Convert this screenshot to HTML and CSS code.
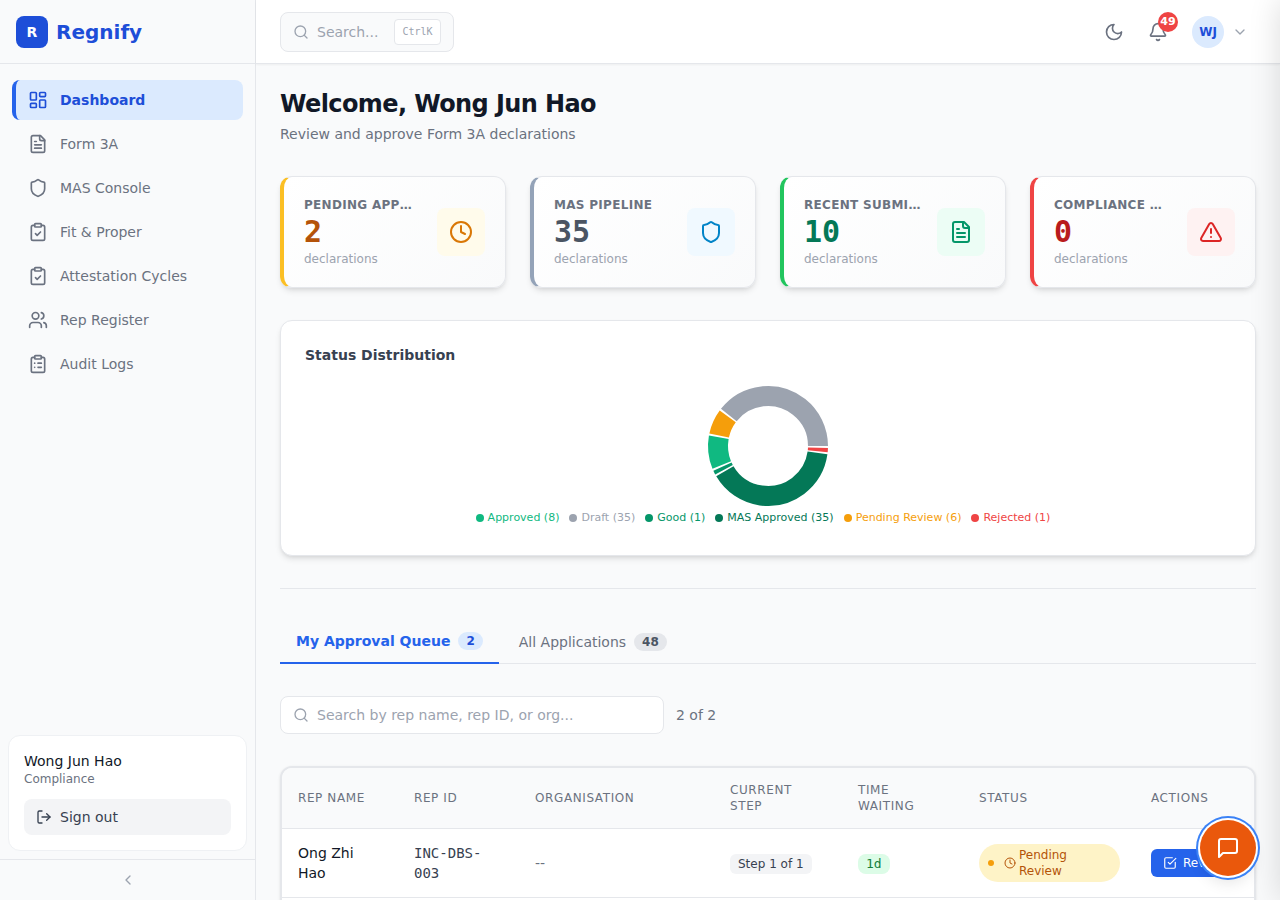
FILE: index.html
```html
<!DOCTYPE html>
<html lang="en">
<head>
<meta charset="utf-8">
<title>Regnify</title>
<link rel="stylesheet" href="styles.css">
</head>
<body>
<div class="app">
  <aside class="sidebar">
    <div class="brand">
      <div class="brand-mark">R</div>
      <div class="brand-name">Regnify</div>
    </div>
    <nav class="nav">
      <a class="nav-item active">
        <svg class="ic20" viewBox="0 0 24 24"><rect x="3" y="3" width="7" height="9" rx="1"/><rect x="14" y="3" width="7" height="5" rx="1"/><rect x="14" y="12" width="7" height="9" rx="1"/><rect x="3" y="16" width="7" height="5" rx="1"/></svg>
        <span>Dashboard</span>
      </a>
      <a class="nav-item">
        <svg class="ic20" viewBox="0 0 24 24"><path d="M15 2H6a2 2 0 0 0-2 2v16a2 2 0 0 0 2 2h12a2 2 0 0 0 2-2V7Z"/><path d="M14 2v4a2 2 0 0 0 2 2h4"/><path d="M10 9H8"/><path d="M16 13H8"/><path d="M16 17H8"/></svg>
        <span>Form 3A</span>
      </a>
      <a class="nav-item">
        <svg class="ic20" viewBox="0 0 24 24"><path d="M20 13c0 5-3.5 7.5-7.66 8.95a1 1 0 0 1-.67-.01C7.5 20.5 4 18 4 13V6a1 1 0 0 1 1-1c2 0 4.5-1.2 6.24-2.72a1.17 1.17 0 0 1 1.52 0C14.51 3.81 17 5 19 5a1 1 0 0 1 1 1z"/></svg>
        <span>MAS Console</span>
      </a>
      <a class="nav-item">
        <svg class="ic20" viewBox="0 0 24 24"><rect x="8" y="2" width="8" height="4" rx="1"/><path d="M16 4h2a2 2 0 0 1 2 2v14a2 2 0 0 1-2 2H6a2 2 0 0 1-2-2V6a2 2 0 0 1 2-2h2"/><path d="m9 14 2 2 4-4"/></svg>
        <span>Fit &amp; Proper</span>
      </a>
      <a class="nav-item">
        <svg class="ic20" viewBox="0 0 24 24"><rect x="8" y="2" width="8" height="4" rx="1"/><path d="M16 4h2a2 2 0 0 1 2 2v14a2 2 0 0 1-2 2H6a2 2 0 0 1-2-2V6a2 2 0 0 1 2-2h2"/><path d="m9 14 2 2 4-4"/></svg>
        <span>Attestation Cycles</span>
      </a>
      <a class="nav-item">
        <svg class="ic20" viewBox="0 0 24 24"><path d="M16 21v-2a4 4 0 0 0-4-4H6a4 4 0 0 0-4 4v2"/><circle cx="9" cy="7" r="4"/><path d="M22 21v-2a4 4 0 0 0-3-3.87"/><path d="M16 3.13a4 4 0 0 1 0 7.75"/></svg>
        <span>Rep Register</span>
      </a>
      <a class="nav-item">
        <svg class="ic20" viewBox="0 0 24 24"><rect x="8" y="2" width="8" height="4" rx="1"/><path d="M16 4h2a2 2 0 0 1 2 2v14a2 2 0 0 1-2 2H6a2 2 0 0 1-2-2V6a2 2 0 0 1 2-2h2"/><path d="M12 11h4"/><path d="M12 16h4"/><path d="M8 11h.01"/><path d="M8 16h.01"/></svg>
        <span>Audit Logs</span>
      </a>
    </nav>
    <div class="user-card">
      <div class="user-name">Wong Jun Hao</div>
      <div class="user-role">Compliance</div>
      <button class="signout">
        <svg class="ic16" viewBox="0 0 24 24"><path d="M9 21H5a2 2 0 0 1-2-2V5a2 2 0 0 1 2-2h4"/><path d="m16 17 5-5-5-5"/><path d="M21 12H9"/></svg>
        <span>Sign out</span>
      </button>
    </div>
    <div class="collapse">
      <svg class="ic16" viewBox="0 0 24 24"><path d="m15 18-6-6 6-6"/></svg>
    </div>
  </aside>

  <div class="content">
    <header class="topbar">
      <div class="top-search">
        <svg class="ic16" viewBox="0 0 24 24"><circle cx="11" cy="11" r="8"/><path d="m21 21-4.3-4.3"/></svg>
        <span class="top-search-text">Search...</span>
        <kbd class="kbd">CtrlK</kbd>
      </div>
      <div class="top-actions">
        <svg class="ic20 moon" viewBox="0 0 24 24"><path d="M12 3a6 6 0 0 0 9 9 9 9 0 1 1-9-9Z"/></svg>
        <div class="bell">
          <svg class="ic20" viewBox="0 0 24 24"><path d="M10.27 21a2 2 0 0 0 3.46 0"/><path d="M3.26 15.33A1 1 0 0 0 4 17h16a1 1 0 0 0 .74-1.67C19.41 13.96 18 12.5 18 8A6 6 0 0 0 6 8c0 4.5-1.41 5.96-2.74 7.33"/></svg>
          <span class="bell-badge">49</span>
        </div>
        <div class="avatar">WJ</div>
        <svg class="ic16 chev" viewBox="0 0 24 24"><path d="m6 9 6 6 6-6"/></svg>
      </div>
    </header>

    <main class="main">
      <h1 class="title">Welcome, Wong Jun Hao</h1>
      <p class="subtitle">Review and approve Form 3A declarations</p>

      <section class="stats">
        <div class="stat stat-amber">
          <div class="stat-body">
            <div class="stat-label">Pending Approvals</div>
            <div class="stat-value">2</div>
            <div class="stat-sub">declarations</div>
          </div>
          <div class="stat-icon"><svg class="ic24" viewBox="0 0 24 24"><circle cx="12" cy="12" r="10"/><path d="M12 6v6l4 2"/></svg></div>
        </div>
        <div class="stat stat-slate">
          <div class="stat-body">
            <div class="stat-label">MAS Pipeline</div>
            <div class="stat-value">35</div>
            <div class="stat-sub">declarations</div>
          </div>
          <div class="stat-icon"><svg class="ic24" viewBox="0 0 24 24"><path d="M20 13c0 5-3.5 7.5-7.66 8.95a1 1 0 0 1-.67-.01C7.5 20.5 4 18 4 13V6a1 1 0 0 1 1-1c2 0 4.5-1.2 6.24-2.72a1.17 1.17 0 0 1 1.52 0C14.51 3.81 17 5 19 5a1 1 0 0 1 1 1z"/></svg></div>
        </div>
        <div class="stat stat-green">
          <div class="stat-body">
            <div class="stat-label">Recent Submissions</div>
            <div class="stat-value">10</div>
            <div class="stat-sub">declarations</div>
          </div>
          <div class="stat-icon"><svg class="ic24" viewBox="0 0 24 24"><path d="M15 2H6a2 2 0 0 0-2 2v16a2 2 0 0 0 2 2h12a2 2 0 0 0 2-2V7Z"/><path d="M14 2v4a2 2 0 0 0 2 2h4"/><path d="M10 9H8"/><path d="M16 13H8"/><path d="M16 17H8"/></svg></div>
        </div>
        <div class="stat stat-red">
          <div class="stat-body">
            <div class="stat-label">Compliance Alerts</div>
            <div class="stat-value">0</div>
            <div class="stat-sub">declarations</div>
          </div>
          <div class="stat-icon"><svg class="ic24" viewBox="0 0 24 24"><path d="m21.73 18-8-14a2 2 0 0 0-3.48 0l-8 14A2 2 0 0 0 4 21h16a2 2 0 0 0 1.73-3"/><path d="M12 9v4"/><path d="M12 17h.01"/></svg></div>
        </div>
      </section>

      <section class="chart-card">
        <h2 class="chart-title">Status Distribution</h2>
        <div class="donut-wrap">
          <svg class="donut" viewBox="0 0 120 120">
            <circle class="seg seg-draft" cx="60" cy="60" r="50" pathLength="360" stroke-dasharray="141.6 218.4" transform="rotate(-141.6 60 60)"/>
            <circle class="seg seg-pending" cx="60" cy="60" r="50" pathLength="360" stroke-dasharray="24.3 335.7" transform="rotate(-167.9 60 60)"/>
            <circle class="seg seg-approved" cx="60" cy="60" r="50" pathLength="360" stroke-dasharray="32.4 327.6" transform="rotate(-202.3 60 60)"/>
            <circle class="seg seg-good" cx="60" cy="60" r="50" pathLength="360" stroke-dasharray="4.05 355.95" transform="rotate(-208.4 60 60)"/>
            <circle class="seg seg-mas" cx="60" cy="60" r="50" pathLength="360" stroke-dasharray="141.6 218.4" transform="rotate(-352 60 60)"/>
            <circle class="seg seg-rejected" cx="60" cy="60" r="50" pathLength="360" stroke-dasharray="4.05 355.95" transform="rotate(-358 60 60)"/>
          </svg>
        </div>
        <ul class="legend">
          <li class="lg lg-approved"><i class="lg-dot"></i>Approved (8)</li>
          <li class="lg lg-draft"><i class="lg-dot"></i>Draft (35)</li>
          <li class="lg lg-good"><i class="lg-dot"></i>Good (1)</li>
          <li class="lg lg-mas"><i class="lg-dot"></i>MAS Approved (35)</li>
          <li class="lg lg-pending"><i class="lg-dot"></i>Pending Review (6)</li>
          <li class="lg lg-rejected"><i class="lg-dot"></i>Rejected (1)</li>
        </ul>
      </section>

      <hr class="divider">

      <div class="tabs">
        <div class="tab tab-active"><span>My Approval Queue</span><span class="tab-count count-blue">2</span></div>
        <div class="tab"><span>All Applications</span><span class="tab-count count-gray">48</span></div>
      </div>

      <div class="filter">
        <div class="filter-input">
          <svg class="ic16" viewBox="0 0 24 24"><circle cx="11" cy="11" r="8"/><path d="m21 21-4.3-4.3"/></svg>
          <span>Search by rep name, rep ID, or org...</span>
        </div>
        <span class="filter-count">2 of 2</span>
      </div>

      <div class="table-wrap">
        <table class="table">
          <colgroup>
            <col class="c1"><col class="c2"><col class="c3"><col class="c4"><col class="c5"><col class="c6"><col class="c7">
          </colgroup>
          <thead>
            <tr>
              <th>Rep Name</th><th>Rep ID</th><th>Organisation</th><th>Current Step</th><th>Time Waiting</th><th>Status</th><th>Actions</th>
            </tr>
          </thead>
          <tbody>
            <tr>
              <td class="td-name">Ong Zhi Hao</td>
              <td class="td-id">INC-DBS-003</td>
              <td class="td-org">--</td>
              <td class="td-pill"><span class="step-pill">Step 1 of 1</span></td>
              <td class="td-pill"><span class="time-pill">1d</span></td>
              <td>
                <span class="status-pill">
                  <i class="status-dot"></i>
                  <svg class="ic12" viewBox="0 0 24 24"><circle cx="12" cy="12" r="10"/><path d="M12 6v6l4 2"/></svg>
                  <span>Pending Review</span>
                </span>
              </td>
              <td>
                <button class="review-btn">
                  <svg class="ic14" viewBox="0 0 24 24"><path d="M21 10.66V19a2 2 0 0 1-2 2H5a2 2 0 0 1-2-2V5a2 2 0 0 1 2-2h11"/><path d="m9 11 3 3L22 4"/></svg>
                  <span>Review</span>
                </button>
              </td>
            </tr>
            <tr class="row-empty"><td colspan="7"></td></tr>
          </tbody>
        </table>
      </div>
    </main>
  </div>
</div>
<button class="fab" aria-label="Chat">
  <svg class="ic24" viewBox="0 0 24 24"><path d="M21 15a2 2 0 0 1-2 2H7l-4 4V5a2 2 0 0 1 2-2h14a2 2 0 0 1 2 2z"/></svg>
</button>
<div class="drawer"></div>
</body>
</html>
```

FILE: styles.css
```css
* { box-sizing: border-box; }
html, body { margin: 0; height: 100%; overflow: hidden; }
body { font-family: "DejaVu Sans", sans-serif; color: #111827; background: #f9fafb; }

svg { fill: none; stroke: currentColor; stroke-width: 2; stroke-linecap: round; stroke-linejoin: round; flex: none; display: block; }
.ic12 { width: 12px; height: 12px; }
.ic14 { width: 14px; height: 14px; }
.ic16 { width: 16px; height: 16px; }
.ic20 { width: 20px; height: 20px; }
.ic24 { width: 24px; height: 24px; }

.app { display: flex; height: 900px; overflow: hidden; }

/* Sidebar */
.sidebar { width: 256px; flex: none; display: flex; flex-direction: column; background: #f9fafb; border-right: 1px solid #e5e7eb; }
.brand { height: 64px; flex: none; display: flex; align-items: center; gap: 8px; padding: 0 16px; border-bottom: 1px solid #e5e7eb; }
.brand-mark { width: 32px; height: 32px; border-radius: 8px; background: #1d4ed8; color: #fff; font-size: 14px; font-weight: 700; display: flex; align-items: center; justify-content: center; }
.brand-name { font-size: 20px; font-weight: 700; color: #1d4ed8; }
.nav { flex: 1; display: flex; flex-direction: column; gap: 4px; padding: 16px 12px; }
.nav-item { height: 40px; display: flex; align-items: center; gap: 12px; padding: 0 12px; border-left: 4px solid transparent; border-radius: 8px; font-size: 14px; color: #6b7280; }
.nav-item.active { background: #dbeafe; border-left-color: #2563eb; color: #1d4ed8; font-weight: 700; width: 231px; }
.user-card { margin: 0 8px 8px; padding: 15px; height: 116px; background: #fff; border: 1px solid #eff1f4; border-radius: 12px; }
.user-name { font-size: 14px; line-height: 20px; color: #111827; }
.user-role { font-size: 12px; line-height: 16px; color: #6b7280; }
.signout { margin: 12px 0 0; width: 207px; height: 36px; padding: 0 12px; display: flex; align-items: center; gap: 8px; border: 0; border-radius: 8px; background: #f3f4f6; color: #374151; font: 14px "DejaVu Sans", sans-serif; }
.collapse { height: 41px; flex: none; display: flex; align-items: center; justify-content: center; border-top: 1px solid #e5e7eb; color: #9ca3af; }

/* Content */
.content { flex: 1; min-width: 0; display: flex; flex-direction: column; }
.topbar { height: 64px; flex: none; display: flex; align-items: center; justify-content: space-between; padding: 0 32px 0 24px; background: #fff; border-bottom: 1px solid #e5e7eb; box-shadow: 0 1px 2px rgba(0,0,0,.05); position: relative; }
.top-search { width: 174px; height: 40px; display: flex; align-items: center; gap: 8px; padding: 0 12px; background: #f9fafb; border: 1px solid #e5e7eb; border-radius: 8px; color: #9ca3af; font-size: 14px; }
.top-search-text { flex: 1; }
.kbd { height: 26px; width: 47px; display: flex; align-items: center; justify-content: center; background: #fff; border: 1px solid #e5e7eb; border-radius: 4px; font: 10px "DejaVu Sans Mono", monospace; color: #9ca3af; }
.top-actions { display: flex; align-items: center; color: #6b7280; }
.moon { margin-right: 24px; }
.bell { position: relative; width: 20px; height: 20px; margin-right: 24px; }
.bell-badge { position: absolute; top: -10px; left: 10px; width: 20px; height: 20px; border-radius: 50%; background: #ef4444; color: #fff; font-size: 11px; font-weight: 700; display: flex; align-items: center; justify-content: center; }
.avatar { width: 32px; height: 32px; border-radius: 50%; background: #dbeafe; color: #1d4ed8; font-size: 12px; font-weight: 700; display: flex; align-items: center; justify-content: center; }
.chev { margin-left: 8px; color: #9ca3af; }

.main { flex: 1; min-height: 0; overflow: hidden; padding: 24px; background: #f9fafb; }
.title { margin: 0; font-size: 24px; line-height: 32px; font-weight: 700; letter-spacing: -.025em; color: #111827; }
.subtitle { margin: 4px 0 0; font-size: 14px; line-height: 20px; color: #6b7280; }

.stats { margin-top: 32px; display: grid; grid-template-columns: repeat(4, minmax(0, 1fr)); gap: 24px; }
.stat { height: 112px; display: flex; align-items: center; justify-content: space-between; gap: 16px; padding: 0 20px; background: linear-gradient(135deg, #fff, #f9fafb); border: 1px solid #e5e7eb; border-left-width: 4px; border-radius: 12px; box-shadow: 0 4px 6px -1px rgba(0,0,0,.1), 0 2px 4px -2px rgba(0,0,0,.1); }
.stat-body { min-width: 0; flex: 1; }
.stat-label { margin-bottom: 1px; font-size: 12px; line-height: 16px; font-weight: 700; letter-spacing: .025em; text-transform: uppercase; color: #6b7280; white-space: nowrap; overflow: hidden; text-overflow: ellipsis; }
.stat-value { font: 700 30px/36px "DejaVu Sans Mono", monospace; }
.stat-sub { margin-top: 1px; font-size: 12px; line-height: 16px; color: #9ca3af; }
.stat-icon { width: 48px; height: 48px; flex: none; border-radius: 8px; display: flex; align-items: center; justify-content: center; }
.stat-amber { border-left-color: #fbbf24; }
.stat-amber .stat-value { color: #b45309; }
.stat-amber .stat-icon { background: #fffbeb; color: #d97706; }
.stat-slate { border-left-color: #94a3b8; }
.stat-slate .stat-value { color: #4b5563; }
.stat-slate .stat-icon { background: #f0f9ff; color: #0284c7; }
.stat-green { border-left-color: #22c55e; }
.stat-green .stat-value { color: #047857; }
.stat-green .stat-icon { background: #ecfdf5; color: #059669; }
.stat-red { border-left-color: #ef4444; }
.stat-red .stat-value { color: #b91c1c; }
.stat-red .stat-icon { background: #fef2f2; color: #dc2626; }

.chart-card { margin-top: 32px; height: 236px; padding: 24px; background: #fff; border: 1px solid #e5e7eb; border-radius: 12px; box-shadow: 0 4px 6px -1px rgba(0,0,0,.1), 0 2px 4px -2px rgba(0,0,0,.1); }
.chart-title { margin: 0; font-size: 14px; line-height: 20px; font-weight: 700; color: #374151; }
.donut-wrap { margin-top: 21px; display: flex; justify-content: center; }
.donut { width: 120px; height: 120px; overflow: visible; }
.seg { stroke-width: 20; stroke-linecap: butt; }
.seg-draft { stroke: #9ca3af; }
.seg-pending { stroke: #f59e0b; }
.seg-approved { stroke: #10b981; }
.seg-good { stroke: #059669; }
.seg-mas { stroke: #047857; }
.seg-rejected { stroke: #ef4444; }
.legend { list-style: none; margin: 5px 0 0; padding: 0 10px 0 0; display: flex; justify-content: center; gap: 10px; font-size: 11px; line-height: 14px; }
.lg { display: flex; align-items: center; gap: 4px; }
.lg-dot { width: 8px; height: 8px; border-radius: 50%; background: currentColor; }
.lg-approved { color: #10b981; }
.lg-draft { color: #9ca3af; }
.lg-good { color: #059669; }
.lg-mas { color: #047857; }
.lg-pending { color: #f59e0b; }
.lg-rejected { color: #ef4444; }

.divider { margin: 32px 0; border: 0; border-top: 1px solid #e5e7eb; }

.tabs { display: flex; gap: 4px; height: 43px; border-bottom: 1px solid #e5e7eb; font-size: 14px; color: #6b7280; }
.tab { display: flex; align-items: center; gap: 8px; padding: 0 16px 2px; height: 43px; }
.tab-active { color: #2563eb; font-weight: 700; border-bottom: 2px solid #2563eb; }
.tab-count { height: 18px; padding: 0 8px; border-radius: 9px; font-size: 12px; font-weight: 700; line-height: 18px; }
.count-blue { background: #dbeafe; color: #1d4ed8; }
.count-gray { background: #e5e7eb; color: #4b5563; }

.filter { margin-top: 32px; display: flex; align-items: center; gap: 12px; }
.filter-input { width: 384px; height: 38px; display: flex; align-items: center; gap: 8px; padding: 0 12px; background: #fff; border: 1px solid #e5e7eb; border-radius: 8px; font-size: 14px; color: #9ca3af; }
.filter-count { font-size: 14px; color: #6b7280; }

.table-wrap { margin-top: 32px; background: #fff; border: 2px solid #e5e7eb; border-radius: 12px; overflow: hidden; box-shadow: 0 1px 3px rgba(0,0,0,.1); }
.table { width: 100%; table-layout: fixed; border-collapse: collapse; }
.c1 { width: 116px; } .c2 { width: 121px; } .c3 { width: 195px; } .c4 { width: 128px; } .c5 { width: 121px; } .c6 { width: 172px; } .c7 { width: 120px; }
th { height: 60px; padding: 0 16px; text-align: left; background: #f9fafb; border-bottom: 1px solid #e5e7eb; font-size: 12px; line-height: 16px; font-weight: 400; letter-spacing: .05em; text-transform: uppercase; color: #6b7280; }
td { height: 69px; padding: 0 16px; border-bottom: 1px solid #e5e7eb; font-size: 14px; line-height: 20px; color: #111827; }
.td-id { font-family: "DejaVu Sans Mono", monospace; color: #374151; }
.td-org { color: #6b7280; }
.td-pill { padding-top: 2px; }
.step-pill { display: inline-block; padding: 0 8px; line-height: 20px; border-radius: 6px; background: #f3f4f6; font-size: 12px; color: #374151; white-space: nowrap; }
.time-pill { display: inline-block; padding: 0 8px; border-radius: 8px; background: #dcfce7; font: 13px/20px "DejaVu Sans Mono", monospace; color: #15803d; }
.status-pill { display: flex; align-items: center; height: 38px; width: 141px; padding: 0 8px 0 9px; border-radius: 19px; background: #fef3c7; font-size: 12px; line-height: 16px; color: #b45309; }
.status-dot { width: 6px; height: 6px; flex: none; border-radius: 50%; background: #f59e0b; margin-right: 10px; }
.status-pill .ic12 { margin-right: 3px; }
.review-btn { height: 28px; padding: 0 12px; display: flex; align-items: center; gap: 6px; border: 0; border-radius: 6px; background: #2563eb; color: #fff; font: 12px "DejaVu Sans", sans-serif; }

.fab { position: fixed; left: 1200px; top: 820px; width: 56px; height: 56px; border: 0; border-radius: 50%; background: #ea580c; color: #fff; display: flex; align-items: center; justify-content: center; box-shadow: 0 0 0 2px #fff, 0 0 0 4px #3b82f6, 0 10px 15px -3px rgba(0,0,0,.1); }
.drawer { position: fixed; top: 0; left: 100%; width: 400px; height: 100%; box-shadow: 0 0 30px rgba(0,0,0,.14); }
```
